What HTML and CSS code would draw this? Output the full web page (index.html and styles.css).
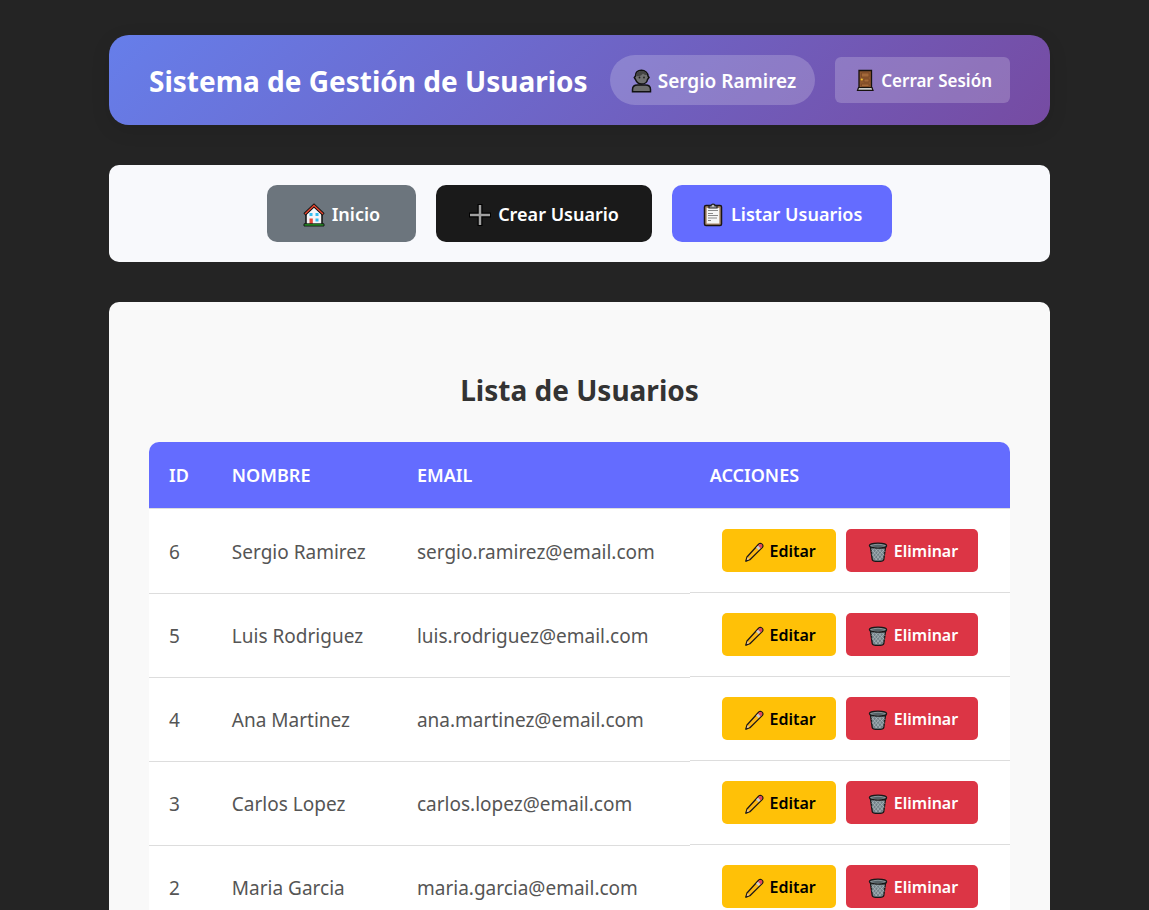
FILE: index.html
```html
<!DOCTYPE html>
<html lang="es">
<head>
<meta charset="utf-8">
<title>Sistema de Gestión de Usuarios</title>
<link rel="stylesheet" href="styles.css">
</head>
<body>
<svg class="sprite" aria-hidden="true">
  <symbol id="person" viewBox="0 0 22 24">
    <path d="M1.500 22.800v-2.300c0-3 2-4.500 5-4.500h8c3 0 5 1.500 5 4.500v2.300z" fill="#6c6c6c" stroke="#111" stroke-width="1.500"/>
    <path d="M4.500 7C4.500 3 7 1.200 10.500 1.200S17 4 17 7l1 1.500-1.500 2C16 13.500 13.500 15 10.500 15s-5-2-6-4.500L3.300 8.500z" fill="#707070" stroke="#111" stroke-width="1.500"/>
    <path d="M5.200 7c0-3.500 2.500-5 5.300-5s5.500 1.500 5.500 4c-2 0-3-.5-4-1.500C11 6.500 8 7.500 5.200 7z" fill="#444"/>
    <circle cx="8.500" cy="8.500" r=".9" fill="#222"/><circle cx="13" cy="8.500" r=".9" fill="#222"/>
  </symbol>
  <symbol id="door" viewBox="0 0 22 24">
    <path d="M6 1.500h12.500v18H6z" fill="#8e562e" stroke="#17120f" stroke-width="1.300"/>
    <path d="M8.500 4H16v4H8.500zm2.500 6h5v3h-5zm-2.500 5H16v2.500H8.500z" fill="#a4683a" stroke="#744423" stroke-width=".7"/>
    <circle cx="8.800" cy="10.500" r="1.100" fill="#f5c52c"/>
    <path d="M5.500 18.500H19l1 2.800H4.500z" fill="#c9c9c9" stroke="#17120f" stroke-width="1.200"/>
  </symbol>
  <symbol id="house" viewBox="0 0 22 24">
    <path d="M3 10.500 11 3l8 7.500V22H3z" fill="#f4f4f7" stroke="#111" stroke-width="1.500"/>
    <path d="m1.500 11.500 9.500-9 9.500 9" fill="none" stroke="#111" stroke-width="3.200"/>
    <path d="m2 11 9-8.500 9 8.500" fill="none" stroke="#e8442e" stroke-width="1.400"/>
    <path d="M6.500 10h3v3h-3zm6 0h3v3h-3zm0 5.500h3v3h-3z" fill="#35bdf0"/>
    <path d="M6.500 15.500h3.300V21H6.500z" fill="#e64835"/>
    <path d="M1 20.800h20V23H1z" fill="#29a329" stroke="#111" stroke-width=".9"/>
  </symbol>
  <symbol id="plus" viewBox="0 0 22 24">
    <path d="M11 1v22M0 12h22" stroke="#000" stroke-width="5"/>
    <path d="M11 2v20M1 12h20" stroke="#a0a0a0" stroke-width="2.500"/>
  </symbol>
  <symbol id="clipboard" viewBox="0 0 22 24">
    <rect x="2.500" y="2.500" width="17" height="20" rx="1.500" fill="#a8896c" stroke="#1c1512" stroke-width="1.500"/>
    <path d="M4.700 5h12.600v15.500H4.700z" fill="#f5f5f5"/>
    <path d="M7 5V3h2c0-2.500 4-2.500 4 0h2v2z" fill="#bbb" stroke="#222" stroke-width="1.200"/>
    <path d="M6 7.500h10M6 10.500h5M6 12.500h10M6 15h9M6 17.500h3" stroke="#888" stroke-width="1"/>
  </symbol>
  <symbol id="pencil" viewBox="0 0 22 24">
    <path d="m2 22 1.300-4.500L16 3.500c2.500-2.500 6.300.9 4 3.700L6.500 20.500z" fill="#fdb813" stroke="#1d1717" stroke-width="1.400" stroke-linejoin="round"/>
    <path d="m15.400 5 1.300-1.200c1.900-1.600 4.600.8 3 2.800l-1.600 1.600z" fill="#e0455f"/>
    <path d="m13.400 7.100 2-2 2.700 2.700-2 2z" fill="#ccd0d4"/>
    <path d="m2.800 21.200 1.200-3.300 2 2.100z" fill="#ebcaa2"/><path d="m1.500 22.700.9-2.600 1.600 1.700z" fill="#222"/>
  </symbol>
  <symbol id="trash" viewBox="0 0 22 24">
    <path d="m2.500 5 2.200 15.500c.3 2.500 12.300 2.500 12.600 0L19.500 5z" fill="#718087" stroke="#181818" stroke-width="1.500"/>
    <path d="m4 9 10 12M4 14l6 7M6 7l11 12m-7-12 8 9m-4-9 5 5M18 9 8 21m10-7-6 7M16 7 6 19m6-12-7 9m3-9-4 5" stroke="#b4c0c4" stroke-width=".7"/>
    <ellipse cx="11" cy="5" rx="9.500" ry="2.800" fill="#859196" stroke="#181818" stroke-width="1.400"/>
    <ellipse cx="11" cy="5.300" rx="6.500" ry="1.200" fill="#566267"/>
  </symbol>
</svg>
<header class="topbar">
  <h1 class="brand">Sistema de Gestión de Usuarios</h1>
  <div class="session">
    <span class="user"><svg class="icon"><use href="#person"/></svg>Sergio Ramirez</span>
    <button class="logout" type="button"><svg class="icon"><use href="#door"/></svg>Cerrar Sesión</button>
  </div>
</header>
<nav class="menu">
  <button class="tab tab-home" type="button"><svg class="icon"><use href="#house"/></svg>Inicio</button>
  <button class="tab tab-create" type="button"><svg class="icon"><use href="#plus"/></svg>Crear Usuario</button>
  <button class="tab tab-list" type="button"><svg class="icon"><use href="#clipboard"/></svg>Listar Usuarios</button>
</nav>
<main class="panel">
  <h2 class="heading">Lista de Usuarios</h2>
  <table class="users">
    <colgroup><col class="col-id"><col class="col-name"><col class="col-email"><col></colgroup>
    <thead><tr><th>ID</th><th>NOMBRE</th><th>EMAIL</th><th>ACCIONES</th></tr></thead>
    <tbody>
      <tr><td>6</td><td>Sergio Ramirez</td><td>sergio.ramirez@email.com</td><td class="actions"><button class="act edit" type="button"><svg class="icon"><use href="#pencil"/></svg>Editar</button><button class="act delete" type="button"><svg class="icon"><use href="#trash"/></svg>Eliminar</button></td></tr>
      <tr><td>5</td><td>Luis Rodriguez</td><td>luis.rodriguez@email.com</td><td class="actions"><button class="act edit" type="button"><svg class="icon"><use href="#pencil"/></svg>Editar</button><button class="act delete" type="button"><svg class="icon"><use href="#trash"/></svg>Eliminar</button></td></tr>
      <tr><td>4</td><td>Ana Martinez</td><td>ana.martinez@email.com</td><td class="actions"><button class="act edit" type="button"><svg class="icon"><use href="#pencil"/></svg>Editar</button><button class="act delete" type="button"><svg class="icon"><use href="#trash"/></svg>Eliminar</button></td></tr>
      <tr><td>3</td><td>Carlos Lopez</td><td>carlos.lopez@email.com</td><td class="actions"><button class="act edit" type="button"><svg class="icon"><use href="#pencil"/></svg>Editar</button><button class="act delete" type="button"><svg class="icon"><use href="#trash"/></svg>Eliminar</button></td></tr>
      <tr><td>2</td><td>Maria Garcia</td><td>maria.garcia@email.com</td><td class="actions"><button class="act edit" type="button"><svg class="icon"><use href="#pencil"/></svg>Editar</button><button class="act delete" type="button"><svg class="icon"><use href="#trash"/></svg>Eliminar</button></td></tr>
    </tbody>
  </table>
</main>
</body>
</html>
```
FILE: styles.css
```css
* { box-sizing: border-box; }
body {
  margin: 0;
  padding: 35px 99px 0 109px;
  background: #242424;
  font-family: "Noto Sans", "Open Sans", sans-serif;
  font-size: 19px;
  line-height: 30px;
}
.sprite { display: none; }
button { border: 0; font: inherit; cursor: pointer; }
.icon { width: 22px; height: 24px; flex: none; }

.topbar {
  display: flex;
  justify-content: space-between;
  align-items: center;
  gap: 19px;
  padding: 20px 40px;
  border-radius: 20px;
  background: linear-gradient(135deg, #667eea 0%, #764ba2 100%);
  box-shadow: 0 5px 19px rgba(0, 0, 0, 0.1);
  color: #fff;
}
.brand { margin: 0; padding-top: 2px; font-size: 28px; line-height: 40px; font-weight: 700; white-space: nowrap; }
.session { display: flex; align-items: center; gap: 20px; white-space: nowrap; }
.user, .logout, .tab, .act {
  display: flex;
  align-items: center;
  justify-content: center;
  gap: 6px;
  color: #fff;
  font-weight: 600;
  white-space: nowrap;
}
.user { gap: 5px; padding: 11px 19px 9px 21px; border-radius: 25px; background: rgba(255, 255, 255, 0.2); }
.logout { padding: 9px 18px 7px; border-radius: 6px; background: rgba(255, 255, 255, 0.2); font-size: 17px; }

.menu {
  display: flex;
  flex-wrap: wrap;
  justify-content: center;
  gap: 20px;
  margin-top: 40px;
  padding: 20px;
  border-radius: 10px;
  background: #f8f9fc;
}
.tab { gap: 7px; padding: 14px 30px 12px; border-radius: 10px; line-height: 31px; font-size: 18px; }
.tab-home { padding-inline: 36px; background: #6c757d; }
.tab-create { padding-inline: 33px; background: #1a1a1a; }
.tab-list { background: #646cff; }

.panel { margin-top: 40px; padding: 68px 40px 40px; border-radius: 10px; background: #f9f9f9; }
.heading { margin: 0 0 32px; color: #333; font-size: 28px; line-height: 40px; font-weight: 700; text-align: center; }
.users {
  width: 100%;
  table-layout: fixed;
  border-collapse: collapse;
  border-radius: 10px;
  overflow: hidden;
  background: #fff;
  color: #555;
}
.col-id { width: 7.3%; }
.col-name { width: 21.5%; }
.col-email { width: 34%; }
.users th, .users td { padding: 18px 20px; border-bottom: 1px solid #ddd; text-align: left; }
.users td { padding: 20px 20px 18px; }
.users th { background: #646cff; color: #fff; font-size: 18px; font-weight: 600; }
.users .actions { display: flex; justify-content: center; gap: 10px; padding: 20px; }
.act { padding: 6px 20px; border-radius: 5px; font-size: 16px; line-height: 31px; }
.act .icon { width: 20px; height: 22px; }
.act { padding: 7px 20px 5px 22px; }
.edit { background: #ffc107; color: #000; }
.delete { background: #dc3545; }
```
